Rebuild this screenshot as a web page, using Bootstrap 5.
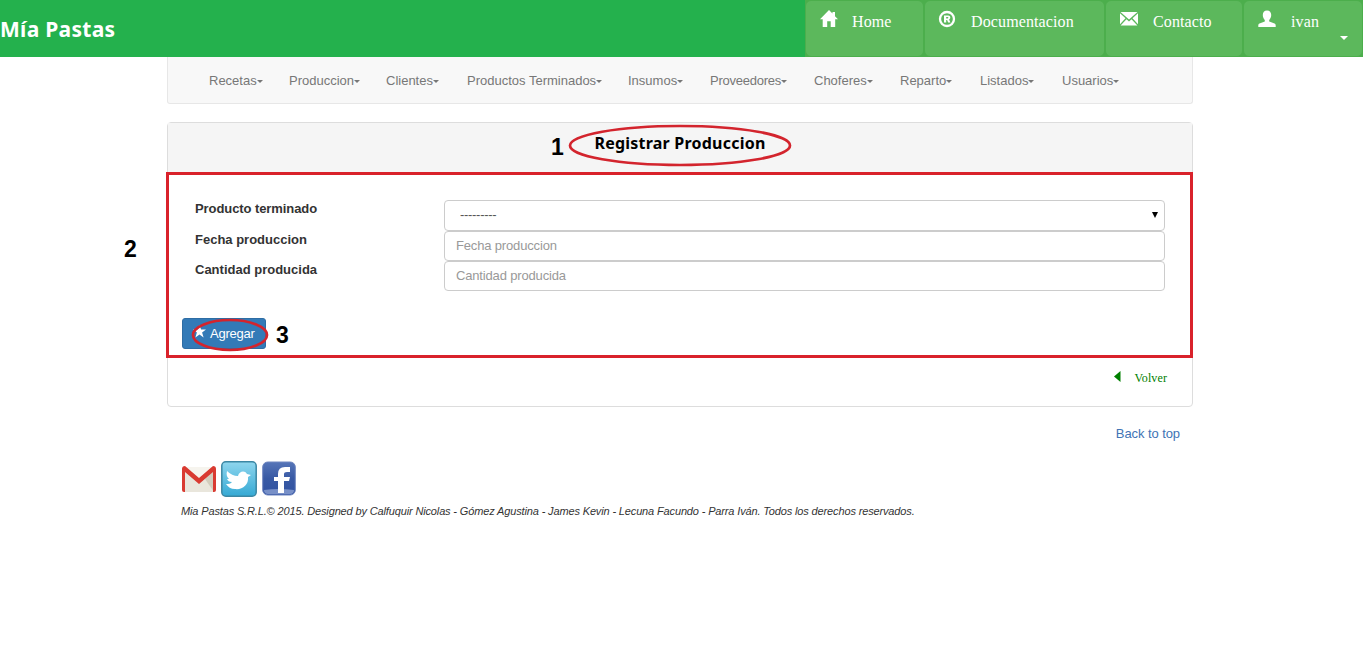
<!DOCTYPE html>
<html lang="es">
<head>
<meta charset="utf-8">
<meta name="viewport" content="width=device-width, initial-scale=1">
<title>Mía Pastas - Registrar Produccion</title>
<link href="https://cdn.jsdelivr.net/npm/bootstrap@5.3.0/dist/css/bootstrap.min.css" rel="stylesheet">
<style>
body{font-family:"Liberation Sans",Arial,sans-serif;font-size:13px;line-height:18px;color:#333;background:#fff}
.site{width:1363px}
.topbar{height:57px;background:#24b14d}
.brand{font:bold 21px/26px "Noto Sans",sans-serif;color:#fff;padding:16px 0 0 0;letter-spacing:.28px}
.tabs{background:#4cae4c}
.tab-btn{height:57px;background:#5cb85c;border:1px solid #4cae4c;border-radius:6px;color:#fff;font:16px/20px "Liberation Serif",serif;padding:11px 0 0 14px;text-decoration:none;position:relative}
.tab-btn svg{width:18px;height:18px;fill:#fff;margin-right:14px;margin-top:-2px}
.tab-btn span{color:#fff;letter-spacing:.12px}
.caret{display:inline-block;border:3px solid transparent;border-top-color:currentColor;border-bottom:0;vertical-align:middle}
.tab-btn .caret{position:absolute;right:14px;top:35px;border-width:4px;border-bottom:0}
.page{width:1026px;margin-left:167px}
.menu{height:47px;background:#f8f8f8;border:1px solid #e7e7e7;border-top:0;border-radius:0 0 3px 3px;padding:15px 0 0 41px}
.menu a{color:#777;text-decoration:none;white-space:nowrap}
.panel{margin-top:18px;height:285px;border:1px solid #ddd;border-radius:4px}
.panel-top{height:50px;background:#f5f5f5;padding-top:8px}
.panel-top h1{font:bold 16px/24px "Noto Sans",sans-serif;letter-spacing:.22px;color:#000;margin:0;text-align:center}
.marked{border:3px solid #e0202b;border-color:#d9222b;margin:-1px -1px 0 -2px;height:186px;padding:25px 25px 0 26px}
.marked label{width:249px;font-weight:bold;padding-left:0;line-height:18px}
.fld{width:721px;height:30px;border:1px solid #ccc;border-radius:4px;font-size:13px;padding:0 11px 2px;min-height:0;color:#555;background-color:#fff;letter-spacing:-.16px}
.fld::placeholder{color:#999;opacity:1}
.pick{height:31px;padding-left:15px;letter-spacing:-.3px;background:#fff url("data:image/svg+xml,%3Csvg xmlns='http://www.w3.org/2000/svg' viewBox='0 0 6 6'%3E%3Cpath d='M0 0h6L3 6z'/%3E%3C/svg%3E") no-repeat right 6px top 11px/6px 6px}
.btn-add{width:84px;height:31px;background:#337ab7;border:1px solid #2e6da4;border-radius:3px;color:#fff;font-size:13px;line-height:18px;padding:0 0 0 10px;text-align:left;margin:27px 0 0 -13px;letter-spacing:-.25px}
.num{position:absolute;font-size:23px;line-height:24px;font-weight:bold;color:#000}
.ring{position:absolute;fill:none;stroke:#d3242d;overflow:visible}
.back{font:12px/16px "Liberation Serif",serif;letter-spacing:.1px;color:green;text-decoration:none}
.totop{color:#4174b5;text-decoration:none;letter-spacing:-.08px}
.legal{font-size:11px;line-height:14px;letter-spacing:-.142px;font-style:italic;color:#333;white-space:nowrap}
</style>
</head>
<body>
<div class="site">
  <header class="topbar d-flex justify-content-between">
    <div class="brand">Mía Pastas</div>
    <nav class="tabs d-flex">
      <a class="tab-btn d-flex align-items-start" style="width:119px" href="#"><svg viewBox="0 0 18 18"><path d="M9 0 0 9.3h2.700V17h4.500v-5.700h3.500V17h4.500V9.300H18l-3-3.100V2h-2.500v1.600z"/></svg><span>Home</span></a>
      <a class="tab-btn d-flex align-items-start" style="width:181px" href="#"><svg viewBox="0 0 18 18" style="margin-left:-1px;margin-right:15px"><circle cx="9" cy="9" r="7" fill="none" stroke="#fff" stroke-width="2.300"/><path fill-rule="evenodd" d="M6 5.500h4.200c2.600 0 2.700 3.300.9 3.900l1.300 3.100h-2.300L9.100 10H8.200v2.500H6zM8.200 7.100v1.300h1.400c1 0 1-1.300 0-1.300z"/></svg><span>Documentacion</span></a>
      <a class="tab-btn d-flex align-items-start" style="width:138px" href="#"><svg viewBox="0 0 18 18" style="margin-right:15px"><path d="M.5 2h17L9 9.500zM0 3.200l5.500 5L0 14.200zm18 0v11l-5.500-6zM6.500 9.200 9 11.500l2.500-2.300 5.900 6.300H.6z"/></svg><span>Contacto</span></a>
      <a class="tab-btn d-flex align-items-start" style="width:120px" href="#"><svg viewBox="0 0 18 18" style="margin-right:15px"><path d="M9 .5c2.800 0 4.200 1.800 4.200 4.500 0 2.200-.8 3.800-2 4.900v1.600l5.300 2.100c.8.400 1.200 1 1.200 2V17H.3v-1.400c0-1 .4-1.600 1.200-2l5.300-2.100V9.900c-1.200-1.100-2-2.700-2-4.900C4.800 2.300 6.200.5 9 .5z"/></svg><span>ivan</span><i class="caret"></i></a>
    </nav>
  </header>
  <main class="page">
    <nav class="menu d-flex">
      <a style="width:80px" href="#">Recetas<i class="caret"></i></a>
      <a style="width:97px" href="#">Produccion<i class="caret"></i></a>
      <a style="width:81px" href="#">Clientes<i class="caret"></i></a>
      <a style="width:161px" href="#">Productos Terminados<i class="caret"></i></a>
      <a style="width:82px" href="#">Insumos<i class="caret"></i></a>
      <a style="width:104px;letter-spacing:-.25px" href="#">Proveedores<i class="caret"></i></a>
      <a style="width:86px" href="#">Choferes<i class="caret"></i></a>
      <a style="width:80px" href="#">Reparto<i class="caret"></i></a>
      <a style="width:82px" href="#">Listados<i class="caret"></i></a>
      <a href="#">Usuarios<i class="caret"></i></a>
    </nav>
    <section class="panel">
      <div class="panel-top position-relative">
        <h1>Registrar Produccion</h1>
        <b class="num" style="left:383px;top:12px">1</b>
        <svg class="ring" style="left:401px;top:2px" width="222" height="42"><ellipse cx="111" cy="20.500" rx="110" ry="19.500" stroke-width="2.700"/></svg>
      </div>
      <form class="marked position-relative">
        <div class="d-flex"><label for="producto" style="letter-spacing:-.08px">Producto terminado</label><select id="producto" class="form-select fld pick"><option>---------</option></select></div>
        <div class="d-flex"><label for="fecha">Fecha produccion</label><input id="fecha" class="form-control fld" placeholder="Fecha produccion"></div>
        <div class="d-flex"><label for="cantidad">Cantidad producida</label><input id="cantidad" class="form-control fld" placeholder="Cantidad producida"></div>
        <button type="button" class="btn btn-add d-flex align-items-center"><svg width="13" height="13" viewBox="0 0 13 13" fill="#fff" class="me-1 mb-1"><path d="m6.500 0 1.600 4.600H13L9.100 7.600l1.500 4.900-4.100-3-4.100 3 1.500-4.900L0 4.600h4.900z"/></svg>Agregar</button>
        <b class="num" style="left:-45px;top:62px">2</b>
        <b class="num" style="left:107px;top:148px">3</b>
        <svg class="ring" style="left:23px;top:144px" width="76" height="32"><ellipse cx="38" cy="16" rx="37" ry="15" stroke-width="2.700"/></svg>
      </form>
      <div class="d-flex justify-content-end" style="padding:12px 25px 0 0"><svg width="7" height="11" viewBox="0 0 7 11" fill="green" style="margin:1px 14px 0 0"><path d="M6.500 0v11L0 5.500z"/></svg><a class="back" href="#">Volver</a></div>
    </section>
    <footer style="padding:18px 13px 0 14px">
      <div class="text-end"><a class="totop" href="#">Back to top</a></div>
      <div class="d-flex" style="margin-top:18px">
        <svg width="36" height="36" viewBox="0 0 36 36"><path fill="#e9e6dc" d="M3 6h30v25H3z"/><path fill="#d2cdbd" d="m24 18 9-8v21z"/><path fill="#f6f4ee" d="M5 6h26L18 18z"/><path fill="#d93a31" d="M1 8q0-3 3-3l14 12L32 5q3 0 3 3v21q0 2-2 2h-1V11L18 23 4 11v20H3q-2 0-2-2z"/></svg>
        <svg width="36" height="36" viewBox="0 0 36 36" style="margin-left:4px"><defs><linearGradient id="sky" x2="0" y2="1"><stop stop-color="#8fd6ee"/><stop offset="1" stop-color="#35a9d4"/></linearGradient></defs><rect x=".8" y=".8" width="34.400" height="34.400" rx="4" fill="url(#sky)" stroke="#3b87a4" stroke-width="1.500"/><path fill="#fff" d="M6 10q5 5 11 5c1-5 7-6 9-2l4 1-3 2c1 8-6 13-13 12-4 0-7-2-9-5 3 0 4 0 6-2-3 0-4-1-5-3h2c-2-2-3-4-2-8z"/></svg>
        <svg width="34" height="36" viewBox="0 0 34 36" style="margin-left:5px"><defs><linearGradient id="navy" x2="0" y2="1"><stop stop-color="#5675b8"/><stop offset=".5" stop-color="#3859a4"/><stop offset="1" stop-color="#3152a1"/></linearGradient></defs><rect x=".7" y="1" width="32.600" height="33" rx="5" fill="url(#navy)" stroke="#6f86c0"/><path fill="#7890c8" d="M2 29q14-2 30 0 0 4-4 4H6q-4 0-4-4z"/><path fill="#fff" d="M28 6v5h-3q-3 0-3 2v3h6l-1 4h-5v12h-6V20h-4v-4h4v-3q0-7 7-7z"/></svg>
      </div>
      <div class="legal" style="margin-top:7px">Mia Pastas S.R.L.© 2015. Designed by Calfuquir Nicolas - Gómez Agustina - James Kevin - Lecuna Facundo - Parra Iván. Todos los derechos reservados.</div>
    </footer>
  </main>
</div>
<script src="https://cdn.jsdelivr.net/npm/bootstrap@5.3.0/dist/js/bootstrap.bundle.min.js"></script>
</body>
</html>
